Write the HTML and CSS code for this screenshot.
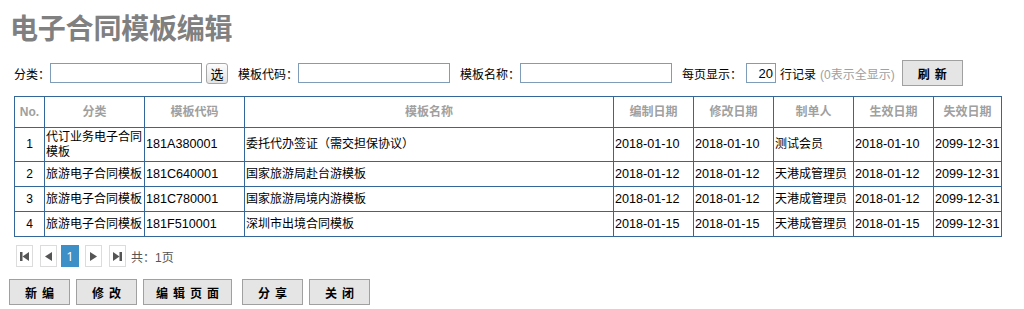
FILE: index.html
```html
<!DOCTYPE html>
<html>
  <head>
    <title>电子合同模板编辑</title>
    <meta charset="utf-8"/>
    <link rel="stylesheet" href="styles.css">
  </head>
  <body>
    <h1 class="title">电子合同模板编辑</h1>
    <div class="filters">
      <label>分类：</label>
      <input type="text" class="field">
      <button class="pick">选</button>
      <label class="gap">模板代码：</label>
      <input type="text" class="field">
      <label class="gap">模板名称：</label>
      <input type="text" class="field">
      <label class="gap">每页显示：</label>
      <input type="text" class="size" value="20">
      <span class="unit">行记录</span>
      <span class="hint">(0表示全显示)</span>
      <button class="btn refresh">刷新</button>
    </div>
    <table class="grid">
      <colgroup>
        <col class="c-no"><col class="c-cat"><col class="c-code"><col class="c-name">
        <col class="c-date"><col class="c-date"><col class="c-date"><col class="c-date"><col class="c-end">
      </colgroup>
      <thead>
        <tr>
          <th>No.</th><th>分类</th><th>模板代码</th><th>模板名称</th><th>编制日期</th>
          <th>修改日期</th><th>制单人</th><th>生效日期</th><th>失效日期</th>
        </tr>
      </thead>
      <tbody>
        <tr class="tall">
          <td class="no">1</td><td>代订业务电子合同模板</td><td class="num">181A380001</td><td>委托代办签证（需交担保协议）</td>
          <td class="num">2018-01-10</td><td class="num">2018-01-10</td><td>测试会员</td><td class="num">2018-01-10</td><td class="num">2099-12-31</td>
        </tr>
        <tr>
          <td class="no">2</td><td>旅游电子合同模板</td><td class="num">181C640001</td><td>国家旅游局赴台游模板</td>
          <td class="num">2018-01-12</td><td class="num">2018-01-12</td><td>天港成管理员</td><td class="num">2018-01-12</td><td class="num">2099-12-31</td>
        </tr>
        <tr>
          <td class="no">3</td><td>旅游电子合同模板</td><td class="num">181C780001</td><td>国家旅游局境内游模板</td>
          <td class="num">2018-01-12</td><td class="num">2018-01-12</td><td>天港成管理员</td><td class="num">2018-01-12</td><td class="num">2099-12-31</td>
        </tr>
        <tr>
          <td class="no">4</td><td>旅游电子合同模板</td><td class="num">181F510001</td><td>深圳市出境合同模板</td>
          <td class="num">2018-01-15</td><td class="num">2018-01-15</td><td>天港成管理员</td><td class="num">2018-01-15</td><td class="num">2099-12-31</td>
        </tr>
      </tbody>
    </table>
    <div class="pager">
      <span class="pg"><svg width="11" height="11" viewBox="0 0 11 11"><rect x="1" y="1" width="2.5" height="9" fill="#555"/><path d="M10 1 L3.5 5.5 L10 10 Z" fill="#555"/></svg></span>
      <span class="pg"><svg width="11" height="11" viewBox="0 0 11 11"><path d="M9 1 L2 5.5 L9 10 Z" fill="#555"/></svg></span>
      <span class="pg current">1</span>
      <span class="pg"><svg width="11" height="11" viewBox="0 0 11 11"><path d="M2 1 L9 5.5 L2 10 Z" fill="#555"/></svg></span>
      <span class="pg"><svg width="11" height="11" viewBox="0 0 11 11"><path d="M1 1 L7.5 5.5 L1 10 Z" fill="#555"/><rect x="7.5" y="1" width="2.5" height="9" fill="#555"/></svg></span>
      <span class="total">共：1页</span>
    </div>
    <div class="actions">
      <button class="btn act">新编</button>
      <button class="btn act">修改</button>
      <button class="btn act wide">编辑页面</button>
      <button class="btn act">分享</button>
      <button class="btn act">关闭</button>
    </div>
  </body>
</html>
```

FILE: styles.css
```css
body {
  margin: 0;
  padding: 0 9px;
  font-family: "Liberation Sans", "Noto Sans CJK SC", sans-serif;
  font-size: 12px;
  color: #000;
  background: #fff;
}
.title {
  margin: 12px 0 0 1px;
  height: 36px;
  line-height: 36px;
  font-size: 28px;
  font-weight: bold;
  color: #808080;
  letter-spacing: -0.2px;
}
.filters {
  display: flex;
  align-items: center;
  height: 26px;
  margin-top: 12px;
  padding-left: 5px;
}
.filters label {
  white-space: nowrap;
}
.filters .gap {
  margin-left: 10px;
}
.field {
  box-sizing: border-box;
  width: 152px;
  height: 20px;
  margin: 0;
  border: 1px solid #7f9db9;
  padding: 0 2px;
}
.pick {
  box-sizing: border-box;
  width: 22px;
  height: 21px;
  margin-left: 4px;
  padding: 0;
  font-family: inherit;
  font-size: 13px;
  border: 1px solid #a7a7a7;
  border-radius: 3px;
  background: linear-gradient(#fdfdfd, #e3e3e3);
}
.size {
  box-sizing: border-box;
  width: 30px;
  height: 20px;
  margin: 0 0 0 4px;
  padding: 0 2px;
  border: 1px solid #7f9db9;
  text-align: right;
  font-family: inherit;
  font-size: 13px;
}
.unit {
  margin-left: 4px;
}
.hint {
  margin-left: 4px;
  color: #a0a0a0;
}
.btn {
  box-sizing: border-box;
  height: 26px;
  padding: 0;
  font-family: inherit;
  font-size: 12px;
  font-weight: bold;
  letter-spacing: 5px;
  text-indent: 5px;
  background: #e5e5e5;
  border: 1px solid #a0a0a0;
  color: #000;
}
.refresh {
  width: 61px;
  margin-left: 7px;
}
.grid {
  margin-top: 10px;
  margin-left: 5px;
  border-collapse: collapse;
  table-layout: fixed;
  width: 987px;
  border: 1px solid #336699;
}
.c-no { width: 30px; }
.c-cat { width: 100px; }
.c-code { width: 100px; }
.c-name { width: 369px; }
.c-date { width: 80px; }
.c-end { width: 68px; }
.grid th, .grid td {
  border: 1px solid #336699;
  padding: 0 1px;
  line-height: 15px;
  text-align: left;
  vertical-align: middle;
  overflow: hidden;
}
.grid th {
  height: 30px;
  text-align: center;
  font-weight: bold;
  color: #a0a0a0;
}
.grid td {
  height: 24px;
}
.grid tr.tall td {
  height: 33px;
}
.grid td.no {
  text-align: center;
}
.grid td.num {
  font-size: 12.6px;
  white-space: nowrap;
}
.pager {
  display: flex;
  align-items: center;
  margin-top: 8px;
  padding-left: 7px;
  height: 22px;
}
.pg {
  box-sizing: border-box;
  display: flex;
  align-items: center;
  justify-content: center;
  width: 17px;
  height: 22px;
  margin-right: 7px;
  border: 1px solid #dcdcdc;
  background: #fff;
}
.pg.current {
  width: 18px;
  margin-right: 6px;
  margin-left: -3px;
  border-color: #3d8fc8;
  background: #3d8fc8;
  color: #fff;
  font-family: "Open Sans", sans-serif;
  font-size: 13px;
}
.total {
  color: #555;
  margin-left: -2px;
}
.actions {
  display: flex;
  margin-top: 12px;
}
.act {
  width: 61px;
  margin-right: 6px;
}
.act.wide {
  width: 89px;
  margin-right: 10px;
}
```
